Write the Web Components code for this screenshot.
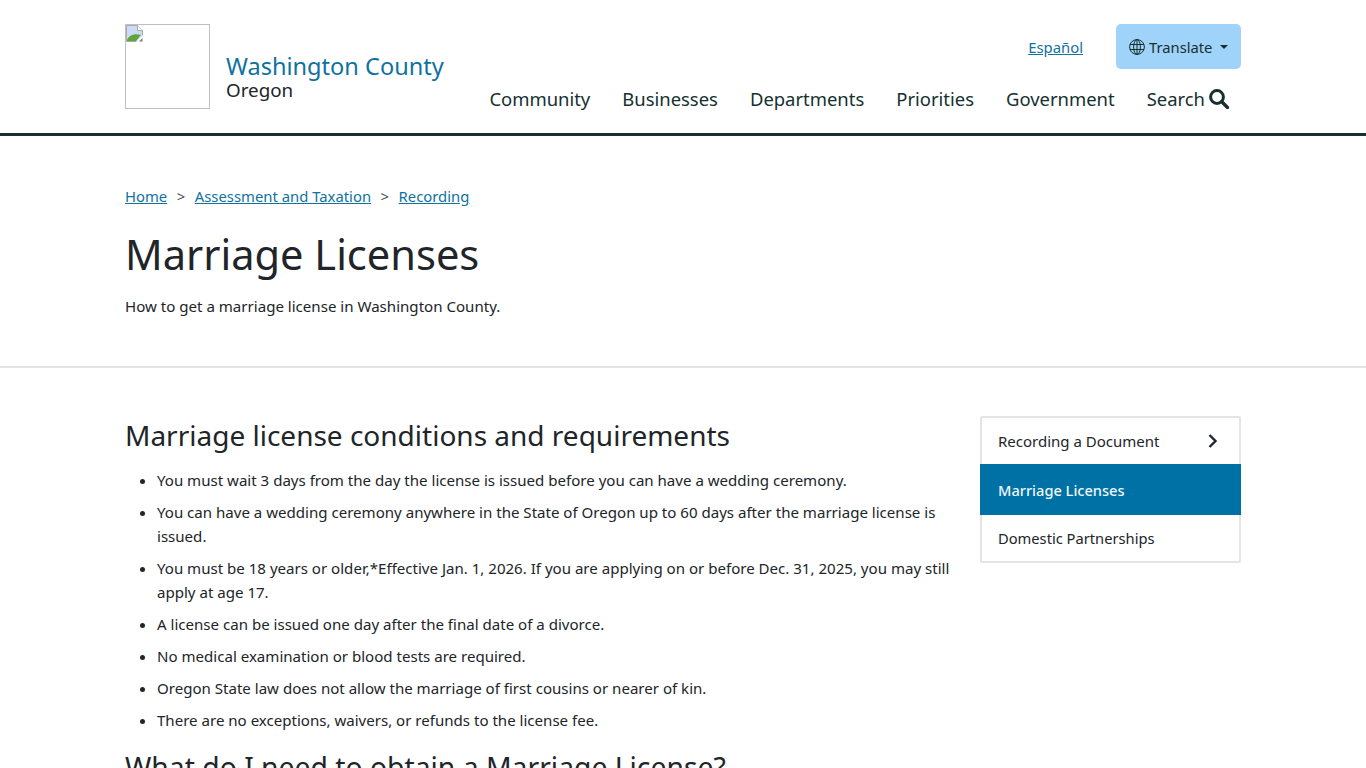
<!DOCTYPE html>
<html lang="en">
<head>
<meta charset="utf-8">
<title>Marriage Licenses</title>
<style>
  html, body { margin: 0; padding: 0; background: #fff; }
  body { font-family: "Noto Sans", sans-serif; color: #212529; font-size: 16px; line-height: 24px; }
</style>
</head>
<body>
<site-header></site-header>
<page-title heading="Marriage Licenses" summary="How to get a marriage license in Washington County."></page-title>
<page-body>
  <h2>Marriage license conditions and requirements</h2>
  <ul>
    <li>You must wait 3 days from the day the license is issued before you can have a wedding ceremony.</li>
    <li>You can have a wedding ceremony anywhere in the State of Oregon up to 60 days after the marriage license is issued.</li>
    <li>You must be 18 years or older,*Effective Jan. 1, 2026. If you are applying on or before Dec. 31, 2025, you may still apply at age 17.</li>
    <li>A license can be issued one day after the final date of a divorce.</li>
    <li>No medical examination or blood tests are required.</li>
    <li>Oregon State law does not allow the marriage of first cousins or nearer of kin.</li>
    <li>There are no exceptions, waivers, or refunds to the license fee.</li>
  </ul>
  <h2 style="font-size: 28.300px">What do I need to obtain a Marriage License?</h2>
</page-body>

<script>
class SiteHeader extends HTMLElement {
  constructor() {
    super();
    this.attachShadow({ mode: "open" });
  }

  connectedCallback() {
    this.shadowRoot.innerHTML = `
      <style>
        :host { display: block; border-bottom: 3px solid #15302f; height: 133px; box-sizing: content-box; }
        .wrap { width: 1116px; margin: 0 auto; display: flex; justify-content: space-between; align-items: flex-start; }
        a { text-decoration: none; color: inherit; }
        .brand { display: flex; align-items: flex-end; padding-top: 24px; }
        .logo { width: 85px; height: 85px; box-sizing: border-box; border: 1px solid #c0c0c0; display: block; }
        .logo svg { display: block; }
        .names { margin-left: 16px; padding-bottom: 9px; }
        .county { display: block; font-size: 23.550px; line-height: 28px; color: #0f72a1; }
        .state { display: block; font-size: 18.800px; line-height: 20px; color: #212529; }
        .right { display: flex; flex-direction: column; align-items: flex-end; padding-top: 24px; }
        .tools { display: flex; align-items: center; gap: 33px; }
        .lang { font-size: 14.850px; color: #0f72a1; text-decoration: underline; }
        .translate { display: flex; align-items: center; height: 45px; width: 125px; box-sizing: border-box; padding-left: 13px; background: #9fd3fa; border-radius: 5px; font-size: 14.750px; color: #15302f; }
        .translate svg { margin-right: 4px; }
        .caret { margin-left: 8px; border-top: 4px solid #15302f; border-left: 4px solid transparent; border-right: 4px solid transparent; }
        nav { display: flex; gap: 32px; margin-top: 18px; padding-right: 12px; font-size: 18.450px; line-height: 24px; color: #15302f; }
        nav a { display: flex; align-items: center; }
        nav svg { margin-left: 4px; }
      </style>
      <div class="wrap">
        <a class="brand" href="#">
          <span class="logo">
            <svg width="18" height="18" viewBox="0 0 18 18">
              <path d="M.5.5H11.500L16.500 5.500V16.500H.5Z" fill="#c9dbf6" stroke="#a9a9a9"/>
              <path d="M11.500.5V5.500H16.500" fill="#fff" stroke="#a9a9a9"/>
              <path d="M1 15C3 10 9 8 15 10L10 16H1Z" fill="#5da53c"/>
              <path d="M10 17L17 10V17Z" fill="#fff"/>
              <path d="M13 16.500L16.500 13V16.500Z" fill="#777"/>
            </svg>
          </span>
          <span class="names">
            <span class="county">Washington County</span>
            <span class="state">Oregon</span>
          </span>
        </a>
        <div class="right">
          <div class="tools">
            <a class="lang" href="#">Español</a>
            <a class="translate" href="#">
              <svg width="16" height="16" viewBox="0 0 16 16" fill="none" stroke="#15302f" stroke-width="1">
                <circle cx="8" cy="8" r="7.400"/>
                <ellipse cx="8" cy="8" rx="3.400" ry="7.400"/>
                <path d="M8 .6V15.400M1 5.500H15M1 10.500H15"/>
              </svg>
              Translate<span class="caret"></span>
            </a>
          </div>
          <nav>
            <a href="#">Community</a>
            <a href="#">Businesses</a>
            <a href="#">Departments</a>
            <a href="#">Priorities</a>
            <a href="#">Government</a>
            <a href="#">Search<svg width="20" height="20" viewBox="0 0 20 20" fill="none" stroke="#15302f"><circle cx="8" cy="8" r="6.400" stroke-width="3"/><path d="M12.800 12.800L18.500 18.500" stroke-width="3.400" stroke-linecap="round"/></svg></a>
          </nav>
        </div>
      </div>
    `;
  }
}

class PageTitle extends HTMLElement {
  constructor() {
    super();
    this.attachShadow({ mode: "open" });
  }

  connectedCallback() {
    this.shadowRoot.innerHTML = `
      <style>
        :host { display: block; height: 230px; border-bottom: 2px solid #e1e3e5; }
        .wrap { width: 1116px; margin: 0 auto; padding-top: 48px; }
        .crumbs { display: flex; font-size: 14.850px; line-height: 24px; }
        .crumbs a { color: #0f72a1; }
        .crumbs span { margin: 0 9.500px; color: #495057; }
        h1 { margin: 19px 0 0; font-size: 41.600px; line-height: 54px; font-weight: 400; color: #212529; }
        p { margin: 13px 0 0; font-size: 15.080px; line-height: 24px; }
      </style>
      <div class="wrap">
        <div class="crumbs">
          <a href="#">Home</a><span>&gt;</span><a href="#">Assessment and Taxation</a><span>&gt;</span><a href="#">Recording</a>
        </div>
        <h1>${this.getAttribute("heading")}</h1>
        <p>${this.getAttribute("summary")}</p>
      </div>
    `;
  }
}

class SideNav extends HTMLElement {
  constructor() {
    super();
    this.attachShadow({ mode: "open" });
  }

  connectedCallback() {
    this.shadowRoot.innerHTML = `
      <style>
        :host { display: block; width: 261px; flex: none; font-size: 15px; }
        .box { border: 2px solid #e4e4e4; border-radius: 2px; position: relative; height: 147px; box-sizing: border-box; }
        a { display: flex; align-items: center; justify-content: space-between; padding: 0 21px 0 16px; color: #212529; text-decoration: none; }
        .first { height: 46px; }
        .active { height: 51px; margin: 0 -2px; padding-left: 18px; background: #0071a4; color: #eef8fd; font-size: 14.600px; font-weight: 500; }
        .last { height: 46px; font-size: 14.700px; }
      </style>
      <div class="box">
        <a class="first" href="#">Recording a Document
          <svg width="10" height="14" viewBox="0 0 10 14" fill="none" stroke="#212529" stroke-width="2.400"><path d="M1.500 1L7.500 7L1.500 13"/></svg>
        </a>
        <a class="active" href="#">Marriage Licenses</a>
        <a class="last" href="#">Domestic Partnerships</a>
      </div>
    `;
  }
}

class PageBody extends HTMLElement {
  constructor() {
    super();
    this.attachShadow({ mode: "open" });
  }

  connectedCallback() {
    this.shadowRoot.innerHTML = `
      <style>
        :host { display: block; }
        .wrap { width: 1116px; margin: 0 auto; padding-top: 48px; display: flex; justify-content: space-between; }
        .content { width: 825px; font-size: 15.070px; line-height: 24px; }
        ::slotted(h2) { margin: 0 0 14px; font-size: 28px; line-height: 38px; font-weight: 400; color: #212529; }
        ::slotted(ul) { margin: 0 0 16px; padding-left: 32px; }
      </style>
      <div class="wrap">
        <div class="content"><slot></slot></div>
        <side-nav></side-nav>
      </div>
    `;
  }
}

customElements.define("site-header", SiteHeader);
customElements.define("page-title", PageTitle);
customElements.define("side-nav", SideNav);
customElements.define("page-body", PageBody);
</script>
<style>
  page-body li { margin-bottom: 8px; }
</style>
</body>
</html>
